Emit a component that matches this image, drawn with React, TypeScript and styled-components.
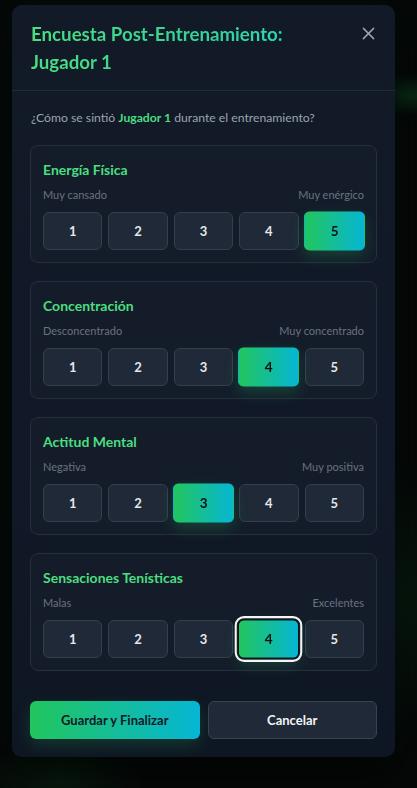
import React, { useState } from "react";
import styled, { createGlobalStyle, css } from "styled-components";

const GlobalStyle = createGlobalStyle`
  * { box-sizing: border-box; }
  html, body { margin: 0; padding: 0; }
  body {
    font-family: Lato, "Noto Sans", Arial, sans-serif;
    background-color: #050807;
    background-image:
      radial-gradient(ellipse 60px 30px at 410px 95px, rgba(34, 197, 94, 0.18), transparent 70%),
      radial-gradient(ellipse 120px 60px at 60px 780px, rgba(34, 197, 94, 0.10), transparent 70%),
      radial-gradient(ellipse 80px 200px at 405px 600px, rgba(34, 197, 94, 0.08), transparent 70%);
    min-height: 788px;
  }
`;

const Overlay = styled.div`
  min-height: 788px;
  padding: 5px 22px 32px 12px;
  display: flex;
  align-items: flex-start;
`;

const Modal = styled.div`
  width: 383px;
  background: linear-gradient(180deg, #121a28 0%, #111827 60%, #0f1623 100%);
  border-radius: 10px;
  box-shadow: 0 20px 40px rgba(0, 0, 0, 0.6), 0 0 30px rgba(34, 197, 94, 0.05);
  display: flex;
  flex-direction: column;
`;

const Header = styled.div`
  display: flex;
  justify-content: space-between;
  align-items: flex-start;
  padding: 15px 18px 14px 19px;
  border-bottom: 1px solid #222b38;
`;

const Title = styled.h2`
  margin: 0;
  font-size: 18.7px;
  line-height: 28px;
  font-weight: 700;
  background: linear-gradient(90deg, #4ade80 0%, #34d399 60%, #2dd4bf 100%);
  -webkit-background-clip: text;
  background-clip: text;
  color: transparent;
  max-width: 290px;
`;

const CloseButton = styled.button`
  background: none;
  border: none;
  padding: 0;
  margin: 5px 1px 0 0;
  width: 16px;
  height: 16px;
  display: flex;
  align-items: center;
  justify-content: center;
  color: #9ca3af;
  cursor: pointer;
`;

const Body = styled.div`
  padding: 17px 18px 12px;
  display: flex;
  flex-direction: column;
`;

const Question = styled.p`
  margin: 0 0 17px 1px;
  font-size: 12.2px;
  line-height: 20px;
  color: #9ca3af;
`;

const Highlight = styled.span`
  color: #4ade80;
  font-weight: 700;
`;

const CardList = styled.div`
  display: flex;
  flex-direction: column;
  gap: 18px;
`;

const Card = styled.div`
  border: 1px solid #262f3d;
  background: #141c2a;
  border-radius: 8px;
  padding: 14px 12px 12px;
`;

const CardTitle = styled.h3`
  margin: 0 0 7px;
  font-size: 14px;
  line-height: 20px;
  font-weight: 700;
  color: #4ade80;
`;

const LabelRow = styled.div`
  display: flex;
  justify-content: space-between;
  font-size: 11px;
  line-height: 16px;
  color: #6b7280;
  margin-bottom: 9px;
`;

const Scale = styled.div`
  display: grid;
  grid-template-columns: repeat(5, 1fr);
  gap: 6px;
`;

const ScaleButton = styled.button<{ $active: boolean; $focused?: boolean }>`
  height: 38px;
  border-radius: 6px;
  border: 1px solid #343e4d;
  background: #1f2937;
  color: #e5e7eb;
  font-family: inherit;
  font-size: 13px;
  font-weight: 700;
  cursor: pointer;
  padding: 0;
  ${(p) =>
    p.$active &&
    css`
      border-color: transparent;
      background: linear-gradient(90deg, #22c55e 0%, #06b6d4 100%);
      color: #0b0f14;
      transform: scale(1.04);
      box-shadow: 0 6px 14px rgba(34, 197, 94, 0.22);
    `}
  ${(p) =>
    p.$focused &&
    css`
      outline: 2px solid #f3f4f6;
      outline-offset: 1px;
      border: 1px solid #0b0f14;
    `}
`;

const Footer = styled.div`
  display: grid;
  grid-template-columns: 1fr 1fr;
  gap: 8px;
  padding: 18px 18px 18px;
`;

const PrimaryButton = styled.button`
  height: 38px;
  border: none;
  border-radius: 6px;
  background: linear-gradient(90deg, #22c55e 0%, #06b6d4 100%);
  color: #111827;
  font-family: inherit;
  font-size: 13px;
  font-weight: 700;
  cursor: pointer;
  box-shadow: 0 6px 16px rgba(34, 197, 94, 0.2);
`;

const SecondaryButton = styled.button`
  height: 38px;
  border: 1px solid #384252;
  border-radius: 6px;
  background: #1f2937;
  color: #f3f4f6;
  font-family: inherit;
  font-size: 13px;
  font-weight: 700;
  cursor: pointer;
`;

type Item = { title: string; low: string; high: string; value: number; focused?: boolean };

const initial: Item[] = [
  { title: "Energía Física", low: "Muy cansado", high: "Muy enérgico", value: 5 },
  { title: "Concentración", low: "Desconcentrado", high: "Muy concentrado", value: 4 },
  { title: "Actitud Mental", low: "Negativa", high: "Muy positiva", value: 3 },
  { title: "Sensaciones Tenísticas", low: "Malas", high: "Excelentes", value: 4, focused: true },
];

export default function App() {
  const [items, setItems] = useState<Item[]>(initial);

  const select = (idx: number, v: number) =>
    setItems((prev) => prev.map((it, i) => (i === idx ? { ...it, value: v } : it)));

  return (
    <>
      <GlobalStyle />
      <Overlay>
        <Modal>
          <Header>
            <Title>Encuesta Post-Entrenamiento: Jugador 1</Title>
            <CloseButton aria-label="Cerrar">
              <svg width="13" height="13" viewBox="0 0 14 14" fill="none" stroke="currentColor" strokeWidth="1.6" strokeLinecap="round">
                <path d="M1.5 1.5 L12.5 12.5 M12.5 1.5 L1.5 12.5" />
              </svg>
            </CloseButton>
          </Header>
          <Body>
            <Question>
              ¿Cómo se sintió <Highlight>Jugador 1</Highlight> durante el entrenamiento?
            </Question>
            <CardList>
              {items.map((it, idx) => (
                <Card key={it.title}>
                  <CardTitle>{it.title}</CardTitle>
                  <LabelRow>
                    <span>{it.low}</span>
                    <span>{it.high}</span>
                  </LabelRow>
                  <Scale>
                    {[1, 2, 3, 4, 5].map((n) => (
                      <ScaleButton
                        key={n}
                        $active={it.value === n}
                        $focused={it.focused && it.value === n}
                        onClick={() => select(idx, n)}
                      >
                        {n}
                      </ScaleButton>
                    ))}
                  </Scale>
                </Card>
              ))}
            </CardList>
          </Body>
          <Footer>
            <PrimaryButton>Guardar y Finalizar</PrimaryButton>
            <SecondaryButton>Cancelar</SecondaryButton>
          </Footer>
        </Modal>
      </Overlay>
    </>
  );
}
